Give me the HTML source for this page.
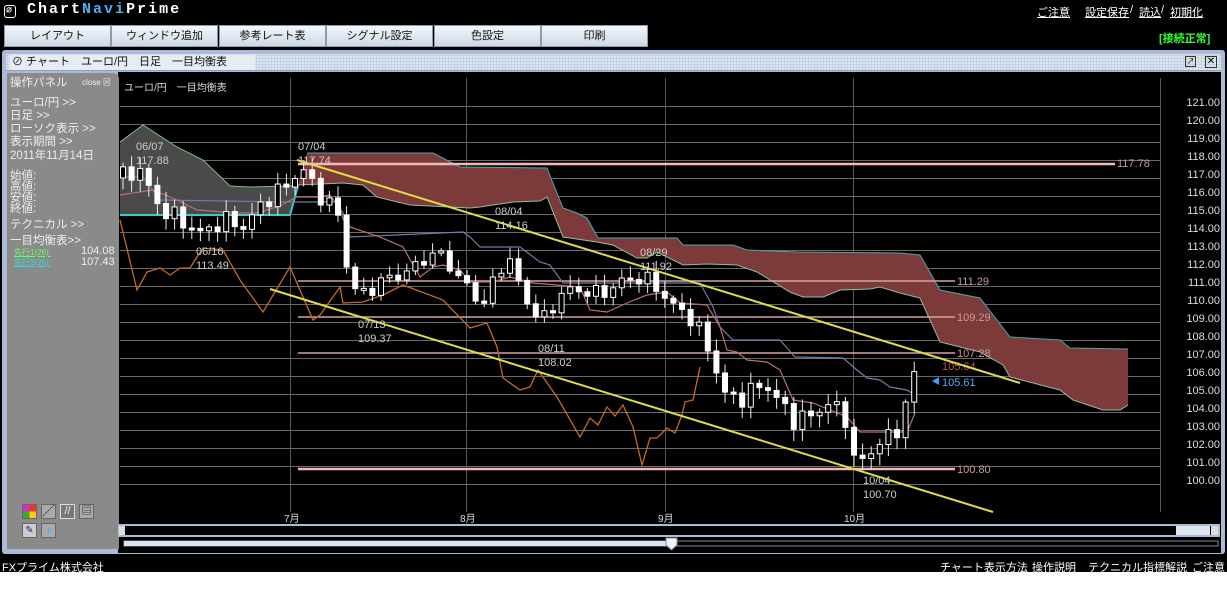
<!DOCTYPE html>
<html><head><meta charset="utf-8">
<style>
*{margin:0;padding:0;box-sizing:border-box}
body{width:1227px;height:600px;background:#fff;position:relative;overflow:hidden;font-family:"Liberation Sans","Noto Sans CJK JP",sans-serif}
.abs{position:absolute}
#topbg{left:0;top:0;width:1227px;height:572px;background:#000}
.logo{left:4px;top:1px;color:#fff;font-size:15px;font-weight:bold;letter-spacing:2px;font-family:"Liberation Mono",monospace}
.links{top:4px;color:#fff;font-size:11px;text-decoration:underline}
.btn{top:25px;height:22px;width:107px;background:linear-gradient(#f4f7fb,#cdd8e4);border:1px solid #8a9ab0;font-size:11px;color:#111;text-align:center;line-height:20px}
.frame{left:2px;top:50px;width:1223px;height:504px;background:#a9bbd6;border-radius:3px}
.title{left:6px;top:54px;width:1215px;height:17px;background:#dde6f0;background-image:radial-gradient(#b9c7d6 0.8px,transparent 1px);background-size:3px 3px;border-bottom:1px solid #8da0b8}
.ttext{left:10px;top:55px;height:15px;background:#e6ecf3;font-size:11px;color:#111;padding:0 6px 0 2px;line-height:15px;width:245px}
.panel{left:7px;top:73px;width:112px;height:476px;background:#8a8a8a;border-radius:0 6px 0 0}
.panel div{position:absolute;left:3px;color:#eee;font-size:11.5px}
.foot{top:559px;color:#fff;font-size:11px}
</style></head><body>
<div id="topbg" class="abs"></div>
<div class="abs logo"><span style="border:1.5px solid #fff;border-radius:3px;font-size:10px;padding:0 1px">∅</span> Chart<span style="color:#4ab0f0">Navi</span>Prime</div>
<div class="abs links" style="left:1037px">ご注意</div>
<div class="abs links" style="left:1085px">設定保存</div><div class="abs" style="left:1130px;top:4px;color:#fff;font-size:11px">/</div>
<div class="abs links" style="left:1139px">読込</div><div class="abs" style="left:1161px;top:4px;color:#fff;font-size:11px">/</div>
<div class="abs links" style="left:1170px">初期化</div>
<div class="abs btn" style="left:4px">レイアウト</div>
<div class="abs btn" style="left:111px">ウィンドウ追加</div>
<div class="abs btn" style="left:219px">参考レート表</div>
<div class="abs btn" style="left:326px">シグナル設定</div>
<div class="abs btn" style="left:434px">色設定</div>
<div class="abs btn" style="left:541px">印刷</div>
<div class="abs" style="left:1159px;top:30px;color:#3f3;font-size:11px;font-weight:bold">[接続正常]</div>
<div class="abs frame"></div>
<div class="abs title"></div>
<div class="abs ttext">⊘ チャート　ユーロ/円　日足　一目均衡表</div>
<div class="abs" style="left:1185px;top:56px;width:11px;height:11px;border:1px solid #333;font-size:8px;line-height:9px;text-align:center">↗</div>
<div class="abs" style="left:1205px;top:56px;width:12px;height:12px;border:1px solid #333;font-size:10px;line-height:10px;text-align:center">✕</div>
<div class="abs" style="left:118px;top:72px;width:1103px;height:481px;background:#000"></div>
<div class="abs panel">
<div style="top:1px">操作パネル</div><div style="top:4px;left:75px;font-size:8px">close ⊠</div>
<div style="top:21px">ユーロ/円 &gt;&gt;</div>
<div style="top:34px">日足 &gt;&gt;</div>
<div style="top:47px">ローソク表示 &gt;&gt;</div>
<div style="top:60px">表示期間 &gt;&gt;</div>
<div style="top:74px">2011年11月14日</div>
<div style="top:98px;line-height:11px">始値:<br>高値:<br>安値:<br>終値:</div>
<div style="top:143px">テクニカル &gt;&gt;</div>
<div style="top:159px">一目均衡表&gt;&gt;</div>
<div style="top:174px;left:7px;font-size:8px;color:#6f6;text-decoration:underline">先行1(26):</div>
<div style="top:184px;left:7px;font-size:8px;color:#3dd;text-decoration:underline">先行2(26):</div>
<div style="top:172px;left:74px;font-size:11px">104.08</div>
<div style="top:183px;left:74px;font-size:11px">107.43</div>
<div style="top:431px;left:15px;width:15px;height:15px;background:conic-gradient(#e33 0 25%,#fc0 0 50%,#3a3 0 75%,#c3c 0);border:1px solid #666"></div>
<div style="top:431px;left:34px;width:15px;height:15px;background:#aaa;border:1px solid #666;color:#222;font-size:12px;line-height:13px;text-align:center">╱</div>
<div style="top:431px;left:53px;width:15px;height:15px;background:#777;border:1px solid #ddd;color:#eee;font-size:11px;line-height:13px;text-align:center">//</div>
<div style="top:431px;left:72px;width:15px;height:15px;background:#aaa;border:1px solid #666;color:#222;font-size:10px;line-height:13px;text-align:center">▤</div>
<div style="top:450px;left:15px;width:15px;height:15px;background:#ccc;border:1px solid #666;color:#226;font-size:10px;line-height:13px;text-align:center">✎</div>
<div style="top:450px;left:34px;width:15px;height:15px;background:#aaa;border:1px solid #666;color:#3bf;font-size:14px;line-height:13px;text-align:center">+</div>
</div>
<svg class="abs" style="left:0;top:0" width="1227" height="600" id="svg">
<g id="grid" stroke="#6a6a6a" stroke-width="1"></g>
<g stroke="#555" stroke-width="1"><line x1="290.5" y1="78" x2="290.5" y2="512"/><line x1="466.5" y1="78" x2="466.5" y2="512"/><line x1="665.5" y1="78" x2="665.5" y2="512"/><line x1="853.5" y1="78" x2="853.5" y2="512"/><line x1="1160.5" y1="78" x2="1160.5" y2="512"/></g>
<g font-size="10" fill="#ddd" font-family="Liberation Sans,Noto Sans CJK JP,sans-serif">
<text x="284" y="522">7月</text><text x="460" y="522">8月</text><text x="658" y="522">9月</text><text x="844" y="522">10月</text>
<text x="124" y="91">ユーロ/円　一目均衡表</text></g>
<g id="axis" font-size="11" fill="#ddd" font-family="Liberation Sans,sans-serif" text-anchor="end"></g>
<polygon fill="#4a4a4a" points="120,142 143,125 177,147 203,160 230,186 250,187 293,186 298,186 290,215 120,215"/>
<polyline fill="none" stroke="#7fbf7f" stroke-width="1" points="120,142 143,125 177,147 203,160 230,186 250,187 293,186 298,186"/>
<polyline fill="none" stroke="#3cc" stroke-width="2" points="120,215 290,215 298,186"/>
<polygon fill="#7d3a3a" points="298,185 307,153 433,153 460,167 547,168 563,208 577,213 587,218 598,238 677,238 683,245 733,245 747,250 797,252 900,253 920,255 940,290 980,298 1010,337 1060,340 1070,348 1128,349 1128,405 1120,410 1103,410 1073,400 1060,390 1010,377 1003,365 980,352 940,342 920,298 900,293 880,287 870,289 840,290 823,297 803,297 790,292 757,272 737,265 707,264 683,265 657,252 647,258 637,258 613,245 597,242 563,237 547,197 540,201 513,202 480,207 470,208 410,205 377,197 363,185 343,183"/>
<polyline fill="none" stroke="#4aa" stroke-width="1" points="307,153 433,153 460,167 547,168 563,208 577,213 587,218 598,238 677,238 683,245 733,245 747,250 797,252 900,253 920,255 940,290 980,298 1010,337 1060,340 1070,348 1128,349"/>
<polyline fill="none" stroke="#9b9" stroke-width="1" points="298,185 343,183 363,185 377,197 410,205 470,208 480,207 513,202 540,201 547,197 563,237 597,242 613,245 637,258 647,258 657,252 683,265 707,264 737,265 757,272 790,292 803,297 823,297 840,290 870,289 880,287 900,293 920,298 940,342 980,352 1003,365 1010,377 1060,390 1073,400 1103,410 1120,410 1128,405"/>
<g stroke="#d9a0a0" stroke-width="1.5"><line x1="298" y1="281" x2="955" y2="281"/><line x1="298" y1="317" x2="955" y2="317"/><line x1="298" y1="353" x2="955" y2="353"/></g>
<g stroke="#f2b8b8" stroke-width="2.5"><line x1="298" y1="164" x2="1115" y2="164"/><line x1="298" y1="469" x2="955" y2="469"/></g>
<g font-size="11" fill="#c99" font-family="Liberation Sans,sans-serif"><text x="957" y="285">111.29</text><text x="957" y="321">109.29</text><text x="957" y="357">107.28</text><text x="957" y="473">100.80</text><text x="1117" y="167">117.78</text><text x="942" y="370" fill="#b55">105.64</text></g>
<polygon points="932,381 939,377 939,385" fill="#49f"/><text x="942" y="386" font-size="11" fill="#5af" font-family="Liberation Sans,sans-serif">105.61</text>
<polyline fill="none" stroke="#c66a20" stroke-width="1.3" points="120,220 137,290 147,272 160,268 170,275 180,268 190,268 197,257 203,248 223,250 240,280 263,312 290,267 313,320 320,315 340,287 343,303 363,302 383,295 403,285 443,300 470,328 487,323 497,347 503,378 520,390 530,387 538,370 557,397 580,437 590,418 598,425 607,407 615,416 623,405 633,427 642,465 650,438 657,438 667,428 675,433 682,415 685,402 693,400 700,367"/>
<polyline fill="none" stroke="#77a" stroke-width="1.2" points="120,177 143,177 160,200 287,202 297,202 337,202 350,237 463,232 470,237 480,247 520,247 540,262 550,265 563,283 700,283 713,307 720,327 733,340 780,340 795,357 843,358 857,370 867,378 880,380 890,387 907,390 915,395"/>
<polyline fill="none" stroke="#b87070" stroke-width="1.2" points="120,195 153,190 177,200 197,210 237,213 257,213 277,207 297,197 317,197 330,195 343,213 350,227 380,237 403,247 420,277 433,267 443,265 460,270 470,282 493,282 510,277 533,283 580,287 590,310 607,312 627,303 647,295 667,292 680,303 707,305 720,327 727,350 737,352 747,360 767,362 780,370 793,400 813,403 847,417 860,432 907,432 915,413"/>
<g id="candles"></g>
<g stroke="#dd4" stroke-width="2"><line x1="297" y1="160" x2="1020" y2="383"/><line x1="270" y1="289" x2="993" y2="512"/></g>
<g font-size="11" fill="#ccc" font-family="Liberation Sans,sans-serif">
<text x="136" y="150">06/07</text><text x="136" y="164">117.88</text>
<text x="196" y="255">06/16</text><text x="196" y="269">113.49</text>
<text x="298" y="150">07/04</text><text x="298" y="164">117.74</text>
<text x="358" y="328">07/13</text><text x="358" y="342">109.37</text>
<text x="495" y="215">08/04</text><text x="495" y="229">114.16</text>
<text x="538" y="352">08/11</text><text x="538" y="366">108.02</text>
<text x="640" y="256">08/29</text><text x="640" y="270">111.92</text>
<text x="863" y="484">10/04</text><text x="863" y="498">100.70</text></g>
<rect x="119" y="525" width="1100" height="11" fill="#000" stroke="#a9bbd6" stroke-width="2"/>
<rect x="119" y="526" width="6" height="9" fill="#ddd"/><rect x="1176" y="526" width="34" height="9" fill="#dde6f0"/><rect x="1211" y="526" width="7" height="9" fill="#ddd"/>
<rect x="124" y="541" width="1094" height="5" fill="#000" stroke="#889" stroke-width="1"/>
<rect x="124" y="541" width="548" height="5" fill="#d8e4f2"/>
<path d="M666,538 h11 v7 l-5.5,5 l-5.5,-5z" fill="#eef3f9" stroke="#889"/>
</svg>
<div class="abs foot" style="left:2px">FXプライム株式会社</div>
<div class="abs foot" style="left:940px;text-decoration:underline">チャート表示方法</div>
<div class="abs foot" style="left:1032px;text-decoration:underline">操作説明</div>
<div class="abs foot" style="left:1088px;text-decoration:underline">テクニカル指標解説</div>
<div class="abs foot" style="left:1192px;text-decoration:underline">ご注意</div>
<script>
(function(){
var NS="http://www.w3.org/2000/svg";
function el(t,a,p){var e=document.createElementNS(NS,t);for(var k in a)e.setAttribute(k,a[k]);p.appendChild(e);return e;}
var Y=function(p){return 106+(121-p)*18;};
var g=document.getElementById('grid'),ax=document.getElementById('axis');
for(var k=0;k<=21;k++){var y=106+18*k+0.5;el('line',{x1:120,y1:y,x2:1160,y2:y},g);var t=el('text',{x:1220,y:y-0.5},ax);t.textContent=(121-k).toFixed(2);}
var kp=[[120,117.0],[140,117.5],[150,116.3],[160,115.3],[170,115.0],[185,114.5],[200,113.9],[215,114.4],[230,114.7],[245,114.2],[260,115.5],[280,116.3],[290,116.8],[300,117.5],[310,117.0],[320,116.0],[330,115.5],[340,114.8],[350,111.0],[360,110.5],[375,111.0],[390,111.5],[410,111.8],[425,112.6],[440,112.8],[455,111.8],[465,111.0],[475,110.5],[485,110.0],[497,111.8],[510,112.5],[520,110.8],[530,110.0],[540,109.0],[550,109.5],[560,110.6],[580,110.8],[600,110.5],[620,111.2],[640,111.5],[650,111.2],[660,110.8],[670,110.0],[690,109.3],[705,108.0],[715,106.5],[725,105.0],[740,104.7],[760,105.5],[770,105.3],[780,104.5],[795,103.5],[810,103.8],[830,104.5],[845,103.8],[855,101.0],[865,101.5],[880,102.3],[895,102.8],[905,104.2],[915,106.3],[922,105.6]];
function P(x){for(var i=1;i<kp.length;i++){if(x<=kp[i][0]){var a=kp[i-1],b=kp[i];return a[1]+(b[1]-a[1])*(x-a[0])/(b[0]-a[0]);}}return kp[kp.length-1][1];}
var c=document.getElementById('candles');var prev=P(120);
for(var x=123;x<=922;x+=8.6){var n=Math.sin(x*1.7)*0.35+Math.sin(x*0.37)*0.2;var cl=P(x)+n;var op=prev;var hi=Math.max(op,cl)+0.15+Math.abs(Math.sin(x*2.3))*0.5;var lo=Math.min(op,cl)-0.15-Math.abs(Math.cos(x*1.1))*0.5;
el('line',{x1:x,y1:Y(hi),x2:x,y2:Y(lo),stroke:'#eee','stroke-width':1},c);
var by=Y(Math.max(op,cl)),h=Math.max(2,Math.abs(Y(op)-Y(cl)));
el('rect',{x:x-2.5,y:by,width:5,height:h,fill:cl>=op?'#000':'#fff',stroke:'#fff','stroke-width':1},c);prev=cl;}
})();
</script>
</body></html>
